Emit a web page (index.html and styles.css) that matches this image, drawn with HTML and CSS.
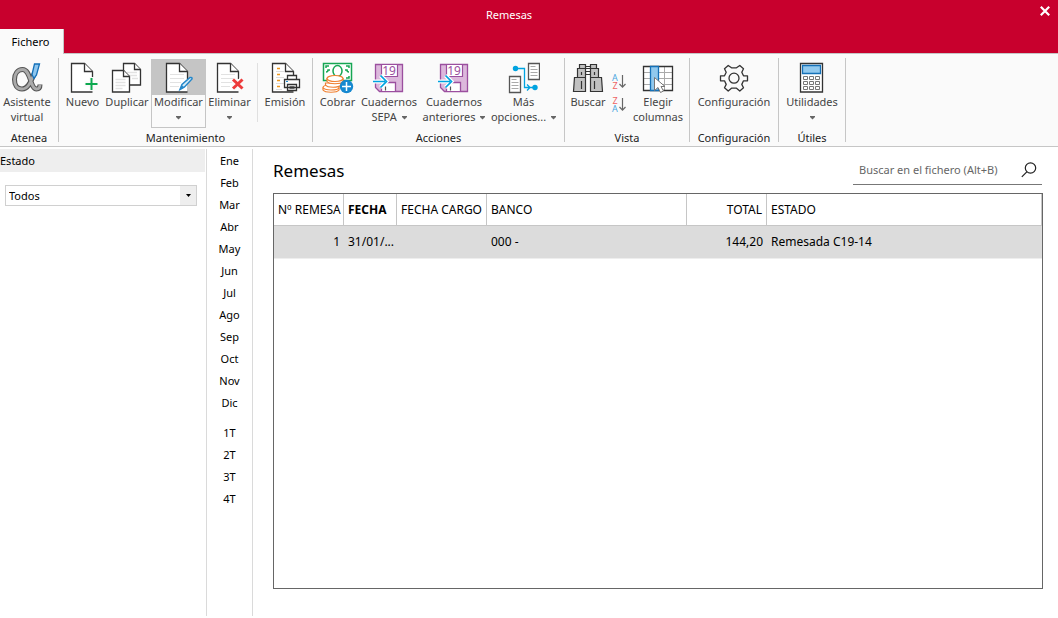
FILE: index.html
```html
<!DOCTYPE html>
<html lang="es">
<head>
<meta charset="utf-8">
<title>Remesas</title>
<link rel="stylesheet" href="styles.css">
</head>
<body>
<header class="titlebar">
  <div class="title-row">
    <span class="window-title">Remesas</span>
    <button class="close" type="button" aria-label="Cerrar">
      <svg width="10" height="10" viewBox="0 0 10 10" fill="none" stroke="#fff" stroke-width="2.2"><path d="M.8.8l8.4 8.4M9.200.8L.8 9.200"/></svg>
    </button>
  </div>
  <nav class="tabs"><button class="tab" type="button">Fichero</button></nav>
</header>

<svg class="defs" width="0" height="0" aria-hidden="true">
  <symbol id="page" viewBox="0 0 32 32">
    <path d="M1 1h13l8 8v21H1z" fill="#fff" stroke="none"/>
    <path d="M22.500 17V9.500L14.500 1.500H1.500v28.500h21" fill="none" stroke="#333" stroke-width="1.300"/>
    <path d="M14.500 1.500v8h8" fill="#fff" stroke="#333" stroke-width="1.300"/>
  </symbol>
  <symbol id="lines" viewBox="0 0 32 32"><path d="M5 12.500h14M5 16.500h14M5 20.500h11M5 24.500h9" stroke="#e2e2e2" stroke-width="1.200"/></symbol>
  <symbol id="book" viewBox="0 0 32 32">
    <path d="M2.500 2.500h27v27H6.500l-4-4z" fill="#dcb8dc" stroke="#9b4f9f" stroke-width="1.300"/>
    <path d="M8.500 2.500h16v12h-16z" fill="#fff" stroke="#9b4f9f" stroke-width="1.200"/>
    <path d="M8.500 29v-8.500h14V29" fill="#fff" stroke="#9b4f9f" stroke-width="1.300"/>
    <path d="M12.500 24.500v4" stroke="#555" stroke-width="1.200"/>
    <path d="M0 19.500h12M7.500 13.500l6 6-6 6" fill="none" stroke="#fff" stroke-width="4"/>
    <path d="M0 19.500h12M7.500 13.500l6 6-6 6" fill="none" stroke="#00a3e0" stroke-width="1.700"/>
  </symbol>
  <symbol id="caret" viewBox="0 0 5 4"><path d="M0 0h5v1L2.500 3.500 0 1z" fill="#666"/></symbol>
</svg>

<section class="ribbon" aria-label="Fichero">
  <div class="group">
    <div class="tools tools-flush">
      <button class="tool w-assistant" type="button">
        <svg class="icon" viewBox="0 0 32 32" fill="none">
          <path d="M24 10C21 15 19 27 11 27 6 27 3.500 23 3.500 17.500S6.500 7.500 11.500 7.500C20 7.500 19 27 25.500 27c2.500 0 3.500-2 3.500-4.500" stroke="#555" stroke-width="5"/>
          <path d="M24 10C21 15 19 27 11 27 6 27 3.500 23 3.500 17.500S6.500 7.500 11.500 7.500C20 7.500 19 27 25.500 27c2.500 0 3.500-2 3.500-4.500" stroke="#aaa" stroke-width="2.800"/>
          <path d="M23.500 2h5l-3 11-2.500 3.500-2-4z" fill="#8ec6ee" stroke="#1470b8" stroke-width="1.300"/>
        </svg>
        <span>Asistente<br>virtual</span>
      </button>
    </div>
    <div class="caption">Atenea</div>
  </div>
  <span class="divider"></span>

  <div class="group">
    <div class="tools">
      <button class="tool w-new" type="button">
        <svg class="icon" viewBox="0 0 32 32"><g transform="translate(3 0)"><use href="#page"/></g><path d="M24.500 15v14M17.500 22h14" stroke="#fafafa" stroke-width="5"/><path d="M24.500 16v12M18.500 22h12" stroke="#0ca84f" stroke-width="2"/></svg>
        <span>Nuevo</span>
      </button>
      <button class="tool w-copy" type="button">
        <svg class="icon" viewBox="0 0 32 32" fill="#fff" stroke="#333" stroke-width="1.300"><path d="M12.500 1.500h11l6 6v15.500h-17z"/><path d="M23.500 1.500v6h6"/><path d="M16 10.500h10M16 13.500h10M21 16.500h6" stroke="#e2e2e2"/><path d="M1.500 8.500h11l6 6v15.500h-17z"/><path d="M12.500 8.500v6h6"/><path d="M4.500 17.500h10M4.500 20.500h10M4.500 23.500h10M4.500 26.500h7" stroke="#e2e2e2"/></svg>
        <span>Duplicar</span>
      </button>
      <button class="tool w-edit tool-active" type="button">
        <svg class="icon" viewBox="0 0 32 32"><g transform="translate(2 0)"><use href="#page"/><use href="#lines"/></g><path d="M17 27.500l2-5L27 15.500q2.500-.5 2 1.500l-7.500 8z" fill="#d8edf9" stroke="#2487ca" stroke-width="1.500"/><path d="M16.500 28l2-5 3 2.500z" fill="#2487ca"/></svg>
        <span>Modificar</span>
        <svg class="caret below"><use href="#caret"/></svg>
      </button>
      <button class="tool w-delete" type="button">
        <svg class="icon" viewBox="0 0 32 32"><g transform="translate(2 0)"><use href="#page"/><use href="#lines"/></g><path d="M19 17.500l9.500 9M28.500 17.500l-9.500 9" stroke="#fafafa" stroke-width="6"/><path d="M19 17.500l9.500 9M28.500 17.500l-9.500 9" stroke="#ed3b3b" stroke-width="3"/></svg>
        <span>Eliminar</span>
        <svg class="caret below"><use href="#caret"/></svg>
      </button>
      <span class="tool-divider"></span>
      <button class="tool w-issue" type="button">
        <svg class="icon" viewBox="0 0 32 32" fill="none"><g transform="translate(2 0)"><use href="#page"/></g><path d="M8 6.500h3M8 12.500h3M8 18.500h3M8 24.500h3" stroke="#ee971e" stroke-width="1.500"/><path d="M7 9.500h8M7 15.500h8M7 21.500h8M7 27.500h6" stroke="#ddd"/><path d="M15.500 17.500h15v8h-15zM18.500 13.500h9v4h-9zM18.500 22.500h9v6h-9z" fill="#fff" stroke="#333" stroke-width="1.300"/><path d="M17 19.500h2" stroke="#1688d0"/><path d="M20.500 24.500h5M20.500 26.500h5" stroke="#666"/></svg>
        <span>Emisión</span>
      </button>
    </div>
    <div class="caption">Mantenimiento</div>
  </div>
  <span class="divider"></span>

  <div class="group">
    <div class="tools">
      <button class="tool w-collect" type="button">
        <svg class="icon" viewBox="0 0 32 32" fill="none"><path d="M1.500 1.500h28v17h-28z" fill="#fff" stroke="#16a653" stroke-width="1.500"/><path d="M4 6V4h3M27 6V4h-3M4 10q2 0 2-2h2M27 10q-2 0-2-2h-2M27 14v2h-3" stroke="#16a653" stroke-width="1.500"/><ellipse cx="15.500" cy="9" rx="4.500" ry="5.500" stroke="#16a653" stroke-width="1.500"/><g fill="#fff" stroke="#f08032" stroke-width="1.200"><path d="M1 26v2c2 3 14 3 16 0v-2z"/><ellipse cx="9" cy="25.500" rx="8" ry="2.500"/><path d="M3.500 21v2c2 3 13 3 15.500 0v-2z"/><path d="M5 16.500v3c2 3 14 3 16 0v-3z"/><ellipse cx="13" cy="16.500" rx="8" ry="3"/></g><circle cx="24.500" cy="24.500" r="6.700" fill="#1688d0"/><path d="M24.500 20v9M20 24.500h9" stroke="#fff" stroke-width="1.500"/></svg>
        <span>Cobrar</span>
      </button>
      <button class="tool w-sepa" type="button">
        <svg class="icon" viewBox="0 0 32 32"><use href="#book"/><text class="book-number" x="16" y="13" text-anchor="middle">19</text></svg>
        <span>Cuadernos<br>SEPA <svg class="caret"><use href="#caret"/></svg></span>
      </button>
      <button class="tool w-previous" type="button">
        <svg class="icon" viewBox="0 0 32 32"><use href="#book"/><text class="book-number" x="16" y="13" text-anchor="middle">19</text></svg>
        <span>Cuadernos<br>anteriores <svg class="caret"><use href="#caret"/></svg></span>
      </button>
      <button class="tool w-more" type="button">
        <svg class="icon" viewBox="0 0 32 32" fill="#fff"><path d="M20.500 1.500h11v16h-11zM1.500 14.500h11v16h-11z" stroke="#555" stroke-width="1.300"/><path d="M22.500 4.500h5M22.500 7.500h7M22.500 10.500h7M22.500 13.500h7M3.500 17.500h5M3.500 20.500h7M3.500 23.500h7M3.500 26.500h7" stroke="#aaa"/><path d="M8 6.500h8.500v19H27M19 22.500l3 3-3 3" fill="none" stroke="#00a3e0" stroke-width="1.300"/><circle cx="7.500" cy="6.500" r="2.700" fill="#00a3e0"/><circle cx="27" cy="25.500" r="2.700" fill="#00a3e0"/></svg>
        <span>Más<br>opciones... <svg class="caret"><use href="#caret"/></svg></span>
      </button>
    </div>
    <div class="caption">Acciones</div>
  </div>
  <span class="divider"></span>

  <div class="group">
    <div class="tools">
      <button class="tool w-find" type="button">
        <svg class="icon" viewBox="0 0 32 32" fill="#c1c1c1" stroke="#333" stroke-width="1.200"><path d="M13.500 4.500h5v2h-5zM13.500 9.500h5v3h-5z" fill="#fff"/><path d="M7.500 2.500h6v4h-6zM18.500 2.500h6v4h-6zM5.500 6.500h8v9h-8zM18.500 6.500h8v9h-8zM2.500 15.500h11v14h-12zM18.500 15.500h11l1 14h-12z"/><path d="M9.500 19v8M9.500 10v3M22.500 10v3M22.500 19v8"/></svg>
        <span>Buscar</span>
      </button>
      <div class="sorts w-sort">
        <button type="button" aria-label="Orden ascendente"><span class="sort-letters"><span class="letter-a">A</span><span class="letter-z">Z</span></span><svg width="7" height="16" viewBox="0 0 7 16" fill="none"><path d="M3.500 1v12M.5 10l3 3.200 3-3.200" stroke="#666" stroke-width="1.200"/></svg></button>
        <button type="button" aria-label="Orden descendente"><span class="sort-letters"><span class="letter-z">Z</span><span class="letter-a">A</span></span><svg width="7" height="16" viewBox="0 0 7 16" fill="none"><path d="M3.500 1v12M.5 10l3 3.200 3-3.200" stroke="#666" stroke-width="1.200"/></svg></button>
      </div>
      <button class="tool w-columns" type="button">
        <svg class="icon" viewBox="0 0 32 32"><path d="M1.500 4.500h29v24h-29z" fill="#fff"/><path d="M2 10.500h28M2 16.500h28M2 22.500h28M22.500 5v23" stroke="#aaa"/><path d="M1.500 4.500h29v24h-29z" fill="none" stroke="#333" stroke-width="1.300"/><path d="M8.500 4.500h8v24h-8z" fill="#91c9ee" stroke="#1571b8" stroke-width="1.300"/><path d="M12.500 15.500v13l3.500-3 2.500 5 3-1.500-2.500-4.500h4z" fill="#fff" stroke="#777"/></svg>
        <span>Elegir<br>columnas</span>
      </button>
    </div>
    <div class="caption">Vista</div>
  </div>
  <span class="divider"></span>

  <div class="group">
    <div class="tools">
      <button class="tool w-settings" type="button">
        <svg class="icon" viewBox="0 0 32 32" fill="none" stroke="#333" stroke-width="1.300"><path d="M2.500 13.800h4l1.700-3.600-1.700-3.500 3.700-3.200 3.300 2.300h5l3.300-2.300 3.700 3.200-1.700 3.500 1.700 3.600h4v5h-4l-1.700 3.600 1.700 3.400-3.700 3.200-3.300-2.800h-5l-3.300 2.800-3.700-3.200 1.700-3.400-1.700-3.600h-4z" stroke-linejoin="round"/><circle cx="16" cy="16.200" r="5"/></svg>
        <span>Configuración</span>
      </button>
    </div>
    <div class="caption">Configuración</div>
  </div>
  <span class="divider"></span>

  <div class="group">
    <div class="tools">
      <button class="tool w-utils" type="button">
        <svg class="icon" viewBox="0 0 32 32" fill="#fff"><path d="M4.500 1.500h22v28.500h-22z" stroke="#333" stroke-width="1.300"/><path d="M6.500 3.500h18v8h-18z" fill="#91c9ee" stroke="#1571b8" stroke-width="1.300"/><path d="M7.500 14.500h4v3h-4zM13.500 14.500h4v3h-4zM19.500 14.500h4v3h-4zM7.500 19.500h4v3h-4zM13.500 19.500h4v3h-4zM19.500 19.500h4v3h-4zM7.500 24.500h4v3h-4zM13.500 24.500h4v3h-4zM19.500 24.500h4v3h-4z" stroke="#777"/></svg>
        <span>Utilidades</span>
        <svg class="caret below"><use href="#caret"/></svg>
      </button>
    </div>
    <div class="caption">Útiles</div>
  </div>
  <span class="divider"></span>
</section>

<main class="workspace">
  <aside class="filters">
    <label class="filter-title" for="state">Estado</label>
    <div class="select-box">
      <select id="state"><option>Todos</option></select>
      <span class="select-arrow"><svg width="5" height="3" viewBox="0 0 5 3"><path d="M0 0h5L2.500 3z"/></svg></span>
    </div>
  </aside>

  <nav class="periods" aria-label="Periodos">
    <button type="button">Ene</button><button type="button">Feb</button><button type="button">Mar</button><button type="button">Abr</button><button type="button">May</button><button type="button">Jun</button><button type="button">Jul</button><button type="button">Ago</button><button type="button">Sep</button><button type="button">Oct</button><button type="button">Nov</button><button type="button">Dic</button>
    <button class="quarter-start" type="button">1T</button><button type="button">2T</button><button type="button">3T</button><button type="button">4T</button>
  </nav>

  <section class="content">
    <div class="content-head">
      <h1>Remesas</h1>
      <div class="search">
        <input type="text" aria-label="Buscar en el fichero" placeholder="Buscar en el fichero (Alt+B)">
        <button type="button" aria-label="Buscar"><svg width="16" height="16" viewBox="0 0 16 16" fill="none" stroke="#222" stroke-width="1.200"><circle cx="9.500" cy="6" r="5.200"/><path d="M5.800 9.800L.8 14.800"/></svg></button>
      </div>
    </div>
    <div class="grid">
      <table>
        <colgroup><col class="c-num"><col class="c-date"><col class="c-charge"><col class="c-bank"><col class="c-total"><col></colgroup>
        <thead><tr><th class="num">Nº REMESA</th><th class="sorted">FECHA</th><th>FECHA CARGO</th><th>BANCO</th><th class="num">TOTAL</th><th>ESTADO</th></tr></thead>
        <tbody><tr><td class="num">1</td><td class="date">31/01/...</td><td></td><td>000 -</td><td class="num">144,20</td><td>Remesada C19-14</td></tr></tbody>
      </table>
    </div>
  </section>
</main>
</body>
</html>
```
FILE: styles.css
```css
* { box-sizing: border-box; }

body {
  margin: 0;
  min-height: 100vh;
  display: flex;
  flex-direction: column;
  background: #fff;
  color: #000;
  font: 11px/15px "Noto Sans", "Open Sans", sans-serif;
}

button, input, select { font: inherit; color: inherit; }
button { padding: 0; border: 0; background: none; }
svg { flex: none; }
.defs { position: absolute; }

.titlebar { background: #c8002d; color: #fff; }
.title-row { display: grid; grid-template-columns: 40px 1fr 40px; height: 29px; align-items: center; }
.window-title { grid-column: 2; text-align: center; padding-right: 40px; margin-left: 40px; }
.close { justify-self: end; align-self: start; display: flex; padding: 6px 8px; }
.title-row .window-title { margin-left: 0; }
.tabs { display: flex; }
.tab { width: 64px; height: 25px; padding-right: 2px; background: #fafafa; color: #000; border-right: 1px solid #c6c6c6; margin-bottom: -1px; z-index: 1; }

.ribbon { display: flex; height: 94px; background: #fafafa; border-top: 1px solid #c6c6c6; border-bottom: 1px solid #c6c6c6; }
.group { display: flex; flex-direction: column; padding-top: 5px; }
.tools { display: flex; padding: 0 3px; }
.tools-flush { padding: 0 4px 0 0; }
.divider { width: 1px; margin: 4px 0; background: #c6c6c6; }
.tool-divider { width: 1px; margin: 4px 3px 6px 4px; background: #e0e0e0; }
.tool { display: flex; flex-direction: column; align-items: center; height: 69px; padding-top: 3px; color: #444; white-space: nowrap; }
.icon { width: 32px; height: 32px; }
.caret { width: 5px; height: 4px; vertical-align: 1px; margin-left: 2px; }
.caret.below { margin: 7px 0 0; }
.caption { text-align: center; line-height: 14px; padding-top: 3px; color: #222; }
.tool-active { background: linear-gradient(#c5c5c5 36px, #fafafa 36px); box-shadow: inset 0 0 0 1px #c5c5c5; }
.book-number { font: 12px "Noto Sans", sans-serif; fill: #9b4f9f; }

.w-assistant { width: 54px; }
.w-new { width: 41px; }
.w-copy { width: 48px; }
.w-edit { width: 55px; }
.w-delete { width: 47px; }
.w-issue { width: 48px; }
.w-collect { width: 43px; }
.w-sepa { width: 60px; }
.w-previous { width: 70px; }
.w-more { width: 69px; margin-right: 3px; }
.w-find { width: 40px; }
.w-sort { width: 22px; }
.w-columns { width: 56px; }
.w-settings { width: 82px; }
.w-utils { width: 60px; }

.sorts { display: flex; flex-direction: column; align-items: center; gap: 7px; padding-top: 15px; }
.sorts button { display: flex; gap: 1px; }
.sort-letters { display: flex; flex-direction: column; width: 6px; font-size: 9px; line-height: 8px; text-align: center; }
.letter-a { color: #4ba6df; }
.letter-z { color: #ee6565; }

.workspace { flex: 1; display: flex; padding: 2px 0; }
.filters { width: 206px; }
.filter-title { display: block; background: #eee; height: 23px; margin-right: 1px; line-height: 23px; }
.select-box { position: relative; margin: 13px 9px 0 5px; }
.select-box select { display: block; width: 100%; height: 21px; padding: 0 3px; appearance: none; background: #fff; border: 1px solid #d0d0d0; border-radius: 0; }
.select-arrow { position: absolute; top: 1px; right: 1px; bottom: 1px; width: 16px; display: flex; align-items: center; justify-content: center; background: #eee; pointer-events: none; }

.periods { width: 47px; display: flex; flex-direction: column; border: solid #dadada; border-width: 0 1px; }
.periods button { height: 22px; }
.periods .quarter-start { margin-top: 8px; }

.content { flex: 1; min-width: 0; display: flex; flex-direction: column; padding: 6px 15px 27px 20px; }
.content-head { display: flex; justify-content: space-between; height: 38px; }
h1 { margin: 0; font-size: 17px; line-height: 31px; font-weight: 400; }
.search { display: flex; width: 189px; height: 30px; margin-right: 1px; border-bottom: 1px solid #777; }
.search input { flex: 1; min-width: 0; padding: 0 6px; border: 0; background: none; outline: 0; }
.search input::placeholder { color: #666; opacity: 1; }
.search button { display: flex; align-items: center; padding-right: 5px; }

.grid { flex: 1; border: 1px solid #666; font-size: 12px; }
table { width: 100%; table-layout: fixed; border-collapse: separate; border-spacing: 0; }
th, td { padding: 0 4px; height: 32px; text-align: left; font-weight: 400; white-space: nowrap; overflow: hidden; text-overflow: ellipsis; }
th { border-right: 1px solid #c6c6c6; border-bottom: 1px solid #c6c6c6; }
td { background: #dcdcdc; height: 33px; padding-bottom: 1px; border-bottom: 1px solid #eee; }
.date { padding-right: 0; }
.num { text-align: right; }
th.num { text-overflow: clip; }
th.sorted { font-weight: 700; }
.c-num { width: 70px; }
.c-date { width: 53px; }
.c-charge { width: 90px; }
.c-bank { width: 200px; }
.c-total { width: 80px; }
```
